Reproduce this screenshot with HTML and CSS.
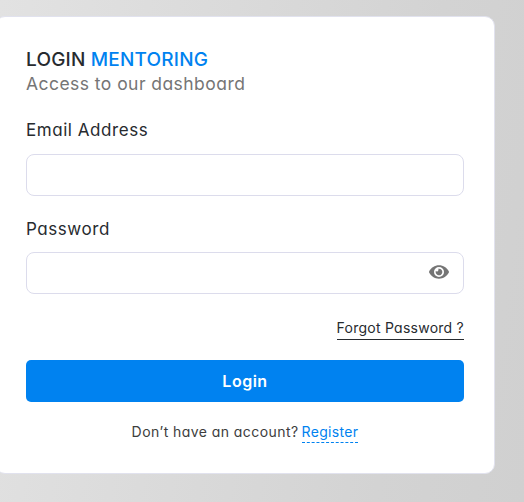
FILE: index.html
```
<!DOCTYPE html>
<html lang="en">
<head>
<meta charset="utf-8">
<title>Login</title>
<link rel="stylesheet" href="styles.css">
</head>
<body>
<main class="card">
  <header class="head">
    <h1 class="title"><span class="word">LOGIN</span> <span class="brand">MENTORING</span></h1>
    <p class="subtitle">Access to our dashboard</p>
  </header>
  <form class="form">
    <div class="field">
      <label class="label label-email" for="email">Email Address</label>
      <input class="input" id="email" type="email">
    </div>
    <div class="field">
      <label class="label label-pass" for="password">Password</label>
      <div class="pass">
        <input class="input" id="password" type="password">
        <svg class="eye" viewBox="0 0 576 512" aria-hidden="true"><path fill="currentColor" d="M572.52 241.4C518.29 135.59 410.93 64 288 64S57.68 135.64 3.48 241.41a32.35 32.35 0 0 0 0 29.19C57.71 376.41 165.07 448 288 448s230.32-71.64 284.52-177.41a32.35 32.35 0 0 0 0-29.19zM288 400a144 144 0 1 1 144-144 143.93 143.93 0 0 1-144 144zm0-240a95.31 95.31 0 0 0-25.31 3.79 47.85 47.85 0 0 1-66.9 66.9A95.78 95.78 0 1 0 288 160z"/></svg>
      </div>
    </div>
    <div class="forgot-row"><a class="forgot">Forgot Password ?</a></div>
    <button class="button" type="button">Login</button>
    <p class="signup"><span class="question">Don’t have an account?</span> <a class="register">Register</a></p>
  </form>
</main>
</body>
</html>
```
FILE: styles.css
```
* { box-sizing: border-box; }
body {
  margin: 0;
  height: 502px;
  overflow: hidden;
  padding-top: 16px;
  background: linear-gradient(98deg, #e2e2e2 0%, #d3d3d3 75%, #d0d0d0 100%);
  font-family: Inter, "Open Sans", sans-serif;
  font-feature-settings: "cv11";
  color: #272b2f;
}
.card {
  width: 500px;
  height: 458px;
  margin-left: -5px;
  padding: 30px 30px 29px;
  background: #fff;
  border: 1px solid #e1e2ee;
  border-radius: 10px;
}
.title {
  margin: 0;
  font-size: 19px;
  line-height: 26px;
  font-weight: 500;
  letter-spacing: 0.2px;
  white-space: nowrap;
}
.brand { color: #0082f0; }
.subtitle {
  margin: 0;
  font-size: 17.5px;
  line-height: 21px;
  letter-spacing: 0.45px;
  color: #757575;
}
.field { margin-bottom: 20px; }
.form { padding-top: 23px; }
.label {
  display: block;
  font-size: 17px;
  line-height: 26px;
  letter-spacing: 0.55px;
  margin-bottom: 11px;
}
.label-pass { margin-bottom: 10px; }
.input {
  display: block;
  width: 438px;
  height: 42px;
  border: 1px solid #dcdcec;
  border-radius: 8px;
  background: #fff;
}
.pass { position: relative; }
.eye {
  position: absolute;
  right: 15px;
  top: 11px;
  width: 20px;
  height: 18px;
  color: #757575;
}
.forgot-row { display: flex; justify-content: flex-end; }
.forgot {
  height: 26px;
  border-bottom: 1px solid #272b2f;
  font-size: 14px;
  line-height: 28px;
  letter-spacing: 0.25px;
  white-space: nowrap;
}
.button {
  display: block;
  width: 438px;
  height: 42px;
  margin: 20px 0 0;
  padding: 0 0 1px;
  border: 0;
  border-radius: 5px;
  background: #0082f0;
  color: #fff;
  font: 600 16px/40px Inter, sans-serif;
  letter-spacing: 0.5px;
}
.signup {
  display: flex;
  justify-content: center;
  gap: 3px;
  margin: 19px 0 0;
  font-size: 14px;
  line-height: 21px;
  letter-spacing: 0.43px;
  color: #3d3d3d;
}
.register { color: #0082f0; border-bottom: 1px dashed #0082f0; letter-spacing: 0.33px; }
```
